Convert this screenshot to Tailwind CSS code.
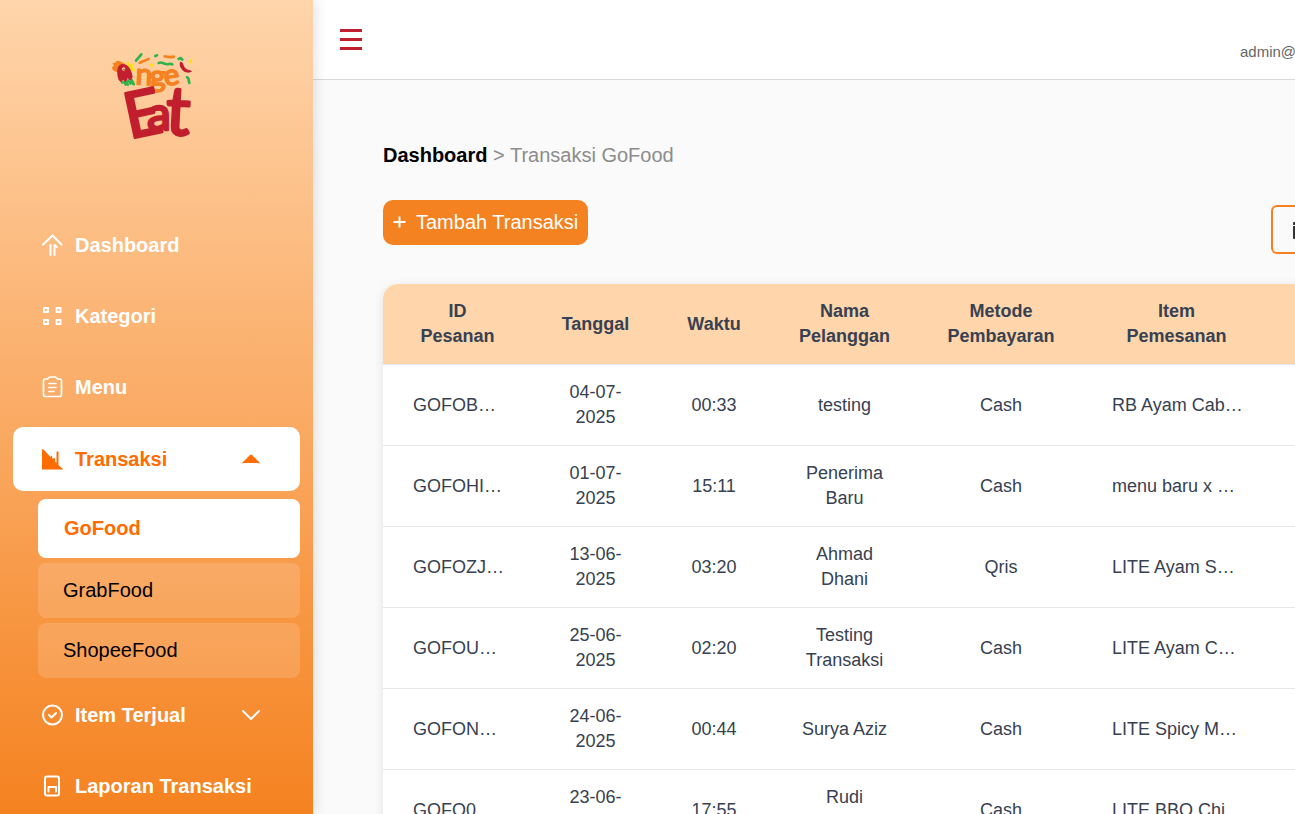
<!DOCTYPE html>
<html lang="id">
<head>
<meta charset="utf-8">
<meta name="viewport" content="width=device-width, initial-scale=1">
<title>Transaksi GoFood</title>
<script src="https://cdn.jsdelivr.net/npm/@tailwindcss/browser@4"></script>
</head>
<body class="flex h-screen overflow-hidden bg-[#fafafa] font-['Liberation_Sans',Arial,sans-serif] text-black">

<aside class="z-10 flex h-screen w-[313px] shrink-0 flex-col overflow-hidden bg-linear-to-b/srgb from-[#ffd5ab] to-[#f58220] shadow-[2px_0_12px_rgba(0,0,0,0.13)]">
  <a href="#" class="mt-10 ml-[100px] block size-[110px] shrink-0" aria-label="Onge Eat">
    <svg viewBox="0 0 330 330" class="size-full overflow-visible" fill="none" stroke-linecap="round" stroke-linejoin="round">
      <g stroke-width="8">
        <path stroke="#2fb34a" d="M108 62 124 43M166 48l5-2M176 69c10-7 18 8 30 3 6-2 8-1 11 1M236 57l6-3 5 5M261 112c7 1 4 8 7 17"/>
        <path stroke="#f58220" d="M119 68l27-11M194 49c11 3 20 3 28 1"/>
        <path stroke="#ffdf1b" d="M153 74l5 3M270 66l3-4M83 68l4 10 10-4-4 13 9 3"/>
        <path stroke="#2fb34a" stroke-width="7" d="M66 128l6-2 5 8 7-13 7 10 4-12 7 14M78 130l6 4M93 126l6 6"/>
      </g>
      <path fill="#f58220" d="M56 100C48 92 40 96 37 86c-4-5 3-5 5-10-8-6-2-9 3-7 2-8 12-9 18-4l12 6Z"/>
      <path fill="#c11e2e" d="M56 120C47 95 52 73 67 72c17-1 29 18 31 40l-8 10-7-8-6 13-8-7-6 7Z"/>
      <circle cx="71" cy="87" r="5" fill="#ffd09f"/><circle cx="72" cy="88" r="2" fill="#222"/>
      <path fill="#c11e2e" d="M241 65c8 0 9 9 13 17 5 8 14 7 23 12-12 8-26 3-32-6-6-8-8-18-4-23Z"/>
      <g fill="#f58220" stroke="#f58220" stroke-width="5" font-family="Lato, sans-serif" font-weight="400">
        <text x="106" y="133" font-size="90" transform="rotate(3 106 133)">n</text>
        <text x="149" y="142" font-size="92">g</text>
        <text x="195" y="138" font-size="88" transform="rotate(-8 195 138)">e</text>
      </g>
      <g fill="#c11e2e" stroke="#c11e2e" stroke-width="8" font-family="Lato, sans-serif" font-weight="400">
        <text x="88" y="297" font-size="190" transform="rotate(-12 88 297)">E</text>
        <text x="142" y="271" font-size="142">a</text>
        <text x="194" y="283" font-size="204" transform="rotate(3 194 283)">t</text>
      </g>
    </svg>
  </a>

  <nav class="mt-[63px] flex flex-col gap-[7px] px-[13px] text-xl font-bold text-white">
    <a href="#" class="flex h-16 shrink-0 items-center gap-3 pl-7">
      <svg viewBox="0 0 22 24" class="h-6 w-[22px]" fill="none" stroke="currentColor" stroke-width="2" stroke-linecap="round" stroke-linejoin="round"><path d="M2 11.500 11.500 2.500l9 9M9.500 12v10M13.500 22V12l2.500 2"/></svg>
      Dashboard</a>
    <a href="#" class="flex h-16 shrink-0 items-center gap-3 pl-7">
      <svg viewBox="0 0 22 22" class="size-[22px]" fill="none" stroke="currentColor" stroke-width="2" stroke-linejoin="round"><path d="M3 3h4v4h-4zM15.500 3h4v4h-4zM3 15h4v4h-4zM15.500 15h4v4h-4z"/></svg>
      Kategori</a>
    <a href="#" class="flex h-16 shrink-0 items-center gap-3 pl-7">
      <svg viewBox="0 0 22 22" class="size-[22px]" fill="none" stroke="currentColor" stroke-width="1.700" stroke-linecap="round" stroke-linejoin="round"><path d="M6.500 3H5Q2.500 3 2.500 5v13.500q0 2 2 2h14q2 0 2-2V5q0-2-2.500-2h-1.500L14.500 1h-6ZM8 7.500h7M8 11.500h7M8 15.500h5"/></svg>
      Menu</a>
    <div class="pt-px">
      <button type="button" aria-expanded="true" class="flex h-16 w-full items-center gap-3 rounded-[10px] bg-white pr-10 pl-7 text-[#ff6c00]">
        <svg viewBox="0 0 22 22" class="size-[22px]" fill="currentColor"><path d="M1 1.500q.500-1 1.500 0l7 7.500.5-1 1 0 .5 3 1.500-1 1 .500v3l1.500 1.500V4q1-1.500 2 0v13l3 3q1.500 0 1.500 1.500H1Z"/></svg>
        <span>Transaksi</span>
        <svg viewBox="0 0 18 10" class="ml-auto h-2.5 w-[18px]" fill="currentColor"><path d="M.500 9.500Q0 9 1 8l7-7q1-.800 2 0l7 7q1 1 .500 1.500l-2-.500h-13Z"/></svg>
      </button>
      <ul class="mt-2 -mb-0.5 ml-[25px] flex flex-col gap-[5px] font-normal text-black">
        <li><a href="#" aria-current="page" class="flex h-[59px] items-center rounded-lg bg-white pb-0.5 pl-[26px] font-bold text-[#ff6c00]">GoFood</a></li>
        <li><a href="#" class="flex h-[55px] items-center rounded-lg bg-white/15 pb-0.5 pl-[25px]">GrabFood</a></li>
        <li><a href="#" class="flex h-[55px] items-center rounded-lg bg-white/15 pb-0.5 pl-[25px]">ShopeeFood</a></li>
      </ul>
    </div>
    <button type="button" aria-expanded="false" class="flex h-16 shrink-0 items-center gap-3 pr-10 pl-7">
      <svg viewBox="0 0 22 22" class="size-[22px]" fill="none" stroke="currentColor" stroke-width="2" stroke-linecap="round" stroke-linejoin="round"><circle cx="11.500" cy="11" r="9.500"/><path d="m8 11 2.500 2.500L15 9"/></svg>
      <span>Item Terjual</span>
      <svg viewBox="0 0 18 10" class="ml-auto h-2.5 w-[18px]" fill="none" stroke="currentColor" stroke-width="2" stroke-linecap="round" stroke-linejoin="round"><path d="m1 1 8 8 8-8"/></svg>
    </button>
    <a href="#" class="flex h-16 shrink-0 items-center gap-3 pl-7">
      <svg viewBox="0 0 22 22" class="size-[22px]" fill="none" stroke="currentColor" stroke-width="2" stroke-linecap="round" stroke-linejoin="round"><rect x="4" y="1.500" width="14" height="19" rx="2"/><path d="M7.500 16.500V12h7.500v4.500"/></svg>
      Laporan Transaksi</a>
  </nav>
</aside>

<div class="flex min-w-0 flex-1 flex-col overflow-hidden">
  <header class="flex h-20 shrink-0 items-center border-b border-[#d9d9d9] bg-white pl-[26px]">
    <button type="button" aria-label="Menu" class="text-[#c11e2e]">
      <svg viewBox="0 0 24 24" class="size-6" fill="currentColor"><path d="M1 1h22v3H1zM1 10h22v3H1zM1 19h22v3H1z"/></svg>
    </button>
    <span class="mt-6 ml-auto w-[55px] text-[15px] leading-6 text-[#666]">admin@</span>
  </header>

  <main class="pt-[60px] pl-[70px]">
    <nav aria-label="Breadcrumb" class="text-xl leading-[30px] text-[#8c8c8c]"><a href="#" class="font-bold text-black">Dashboard</a> &gt; <span>Transaksi GoFood</span></nav>
    <div class="mt-[30px] -mr-[116px] flex items-start justify-between">
      <button type="button" class="flex h-[45px] items-center gap-2.5 rounded-[10px] bg-[#f58220] px-2.5 pb-0.5 text-xl text-white">
        <svg viewBox="0 0 13 13" class="size-[13px]" fill="none" stroke="currentColor" stroke-width="2"><path d="M.500 7h12M6.500 1.500v11"/></svg>
        Tambah Transaksi</button>
      <button type="button" aria-label="Export" class="mt-[5px] flex h-[49px] w-[140px] items-center rounded-md border-2 border-[#f58220] pl-5 text-[#333]">
        <svg viewBox="0 0 18 20" class="h-5 w-[18px]" fill="currentColor"><path d="M0 3q0-1 1-1h16q1 0 1 1v2H0ZM0 6h18v12q0 1-1 1H1q-1 0-1-1Z"/></svg>
      </button>
    </div>

    <div class="mt-[30px] w-[1100px] overflow-hidden rounded-[15px] bg-white shadow-[0_2px_10px_rgba(0,0,0,0.1)]">
      <table class="w-full table-fixed border-collapse text-center text-lg leading-[25px] text-[#374151] [&_td]:py-[15px] [&_th]:px-[25px] [&_th]:py-[15px] [&_tr]:border-b [&_tr]:border-[#e5e7eb] [&_td:nth-child(1)]:pl-[30px] [&_td:nth-child(1)]:text-left [&_td:nth-child(6)]:pl-[30px] [&_td:nth-child(6)]:text-left [&_td:nth-child(1)]:whitespace-nowrap [&_td:nth-child(6)]:whitespace-nowrap">
        <colgroup><col class="w-[149px]"><col class="w-[127px]"><col class="w-[110px]"><col class="w-[151px]"><col class="w-[162px]"><col class="w-[189px]"><col></colgroup>
        <thead class="bg-[#ffd5ab]">
          <tr><th scope="col">ID<br>Pesanan</th><th scope="col">Tanggal</th><th scope="col">Waktu</th><th scope="col">Nama<br>Pelanggan</th><th scope="col">Metode<br>Pembayaran</th><th scope="col">Item<br>Pemesanan</th><td></td></tr>
        </thead>
        <tbody>
          <tr><td>GOFOB…</td><td>04-07-<br>2025</td><td>00:33</td><td>testing</td><td>Cash</td><td>RB Ayam Cab…</td><td></td></tr>
          <tr><td>GOFOHI…</td><td>01-07-<br>2025</td><td>15:11</td><td>Penerima<br>Baru</td><td>Cash</td><td>menu baru x …</td><td></td></tr>
          <tr><td>GOFOZJ…</td><td>13-06-<br>2025</td><td>03:20</td><td>Ahmad<br>Dhani</td><td>Qris</td><td>LITE Ayam S…</td><td></td></tr>
          <tr><td>GOFOU…</td><td>25-06-<br>2025</td><td>02:20</td><td>Testing<br>Transaksi</td><td>Cash</td><td>LITE Ayam C…</td><td></td></tr>
          <tr><td>GOFON…</td><td>24-06-<br>2025</td><td>00:44</td><td>Surya Aziz</td><td>Cash</td><td>LITE Spicy M…</td><td></td></tr>
          <tr><td>GOFO0…</td><td>23-06-<br>2025</td><td>17:55</td><td>Rudi<br>&nbsp;</td><td>Cash</td><td>LITE BBQ Chi…</td><td></td></tr>
        </tbody>
      </table>
    </div>
  </main>
</div>
</body>
</html>
